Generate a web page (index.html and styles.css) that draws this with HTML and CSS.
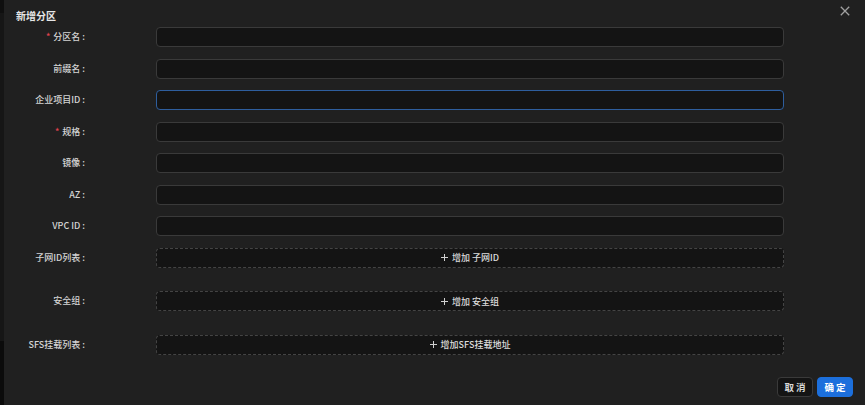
FILE: index.html
```html
<!DOCTYPE html>
<html lang="zh">
<head>
<meta charset="utf-8">
<link rel="stylesheet" href="styles.css">
</head>
<body>
<div class="page">
  <div class="strip"></div>
  <div class="modal">
    <div class="header">
      <div class="title">新增分区</div>
      <svg class="close" width="10" height="10" viewBox="0 0 10 10"><path d="M0.8 0.8L9.2 9.2M9.2 0.8L0.8 9.2" stroke="#a0a0a0" stroke-width="1.3" fill="none"/></svg>
    </div>
    <div class="form">
      <div class="row"><label class="label"><span class="req">*</span>分区名<span class="colon">:</span></label><div class="input"></div></div>
      <div class="row"><label class="label">前缀名<span class="colon">:</span></label><div class="input"></div></div>
      <div class="row"><label class="label">企业项目ID<span class="colon">:</span></label><div class="input focus"></div></div>
      <div class="row"><label class="label"><span class="req">*</span>规格<span class="colon">:</span></label><div class="input"></div></div>
      <div class="row"><label class="label">镜像<span class="colon">:</span></label><div class="input"></div></div>
      <div class="row"><label class="label">AZ<span class="colon">:</span></label><div class="input"></div></div>
      <div class="row"><label class="label">VPC ID<span class="colon">:</span></label><div class="input"></div></div>
      <div class="row list"><label class="label">子网ID列表<span class="colon">:</span></label><div class="dashed"><svg class="plus" width="7" height="7" viewBox="0 0 7 7"><path d="M3.5 0V7M0 3.5H7" stroke="#d0d0d0" stroke-width="1"/></svg>增加 子网ID</div></div>
      <div class="row list"><label class="label">安全组<span class="colon">:</span></label><div class="dashed"><svg class="plus" width="7" height="7" viewBox="0 0 7 7"><path d="M3.5 0V7M0 3.5H7" stroke="#d0d0d0" stroke-width="1"/></svg>增加 安全组</div></div>
      <div class="row list"><label class="label">SFS挂载列表<span class="colon">:</span></label><div class="dashed"><svg class="plus" width="7" height="7" viewBox="0 0 7 7"><path d="M3.5 0V7M0 3.5H7" stroke="#d0d0d0" stroke-width="1"/></svg>增加SFS挂载地址</div></div>
    </div>
    <div class="footer">
      <button class="btn">取 消</button>
      <button class="btn primary">确 定</button>
    </div>
  </div>
</div>
</body>
</html>
```

FILE: styles.css
```css
* { box-sizing: border-box; }
html, body { margin: 0; padding: 0; background: #0c0c0c; }
body {
  width: 865px;
  height: 405px;
  overflow: hidden;
  font-family: "Noto Sans CJK SC", "Noto Sans", sans-serif;
  color: #d0d0d0;
}
.page { display: flex; height: 405px; }
.strip {
  width: 4px;
  flex: none;
  background: linear-gradient(#0f0f0f 0 13px, #161616 13px 341px, #0b0b0b 341px);
}
.modal {
  flex: 1;
  background: #202020;
  padding: 8px 12px 0 12px;
  display: flex;
  flex-direction: column;
}
.header {
  display: flex;
  justify-content: space-between;
  align-items: flex-start;
  height: 16px;
}
.title {
  font-size: 10px;
  font-weight: 700;
  line-height: 16px;
  color: #e6e6e6;
}
.close { margin-top: -2px; margin-right: 3px; }
.form { margin-top: 3px; }
.row {
  display: flex;
  align-items: center;
  height: 20px;
  margin-bottom: 11.5px;
}
.row.list { margin-bottom: 23.5px; }
.label {
  width: 69px;
  flex: none;
  text-align: right;
  font-size: 9px;
  font-weight: 500;
  line-height: 20px;
  color: #d4d4d4;
  white-space: nowrap;
}
.colon { margin-left: 2px; }
.req { color: #e0424e; margin-right: 3px; font-size: 9px; }
.input, .dashed {
  width: 628px;
  flex: none;
  height: 20px;
  margin-left: 71px;
  background: #141414;
  border: 1px solid #3a3a3a;
  border-radius: 4px;
}
.input.focus { border-color: #2e5e9e; }
.dashed {
  border-style: dashed;
  border-color: #444;
  display: flex;
  align-items: center;
  justify-content: center;
  font-size: 9px;
  font-weight: 500;
  color: #dcdcdc;
}
.plus { margin-right: 4px; flex: none; }
.footer {
  display: flex;
  justify-content: flex-end;
  gap: 4px;
  margin-top: -1px;
}
.btn {
  width: 36px;
  height: 20px;
  border-radius: 4px;
  border: 1px solid #3a3a3a;
  background: #141414;
  color: #d8d8d8;
  font-family: "Noto Sans CJK SC", sans-serif;
  font-size: 9.5px;
  font-weight: 700;
  padding: 0;
  line-height: 18px;
}
.btn.primary {
  background: #1c6fdc;
  border-color: #1c6fdc;
  color: #ffffff;
}
```
